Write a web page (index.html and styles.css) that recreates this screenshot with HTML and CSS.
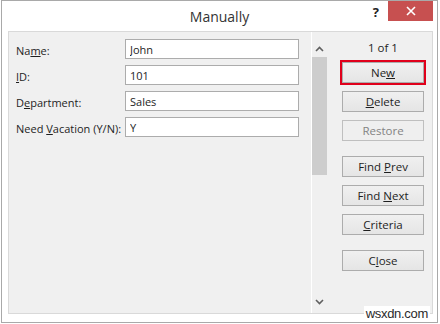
FILE: index.html
```html
<!DOCTYPE html>
<html>

<head>
    <link rel="stylesheet" href="styles.css">
</head>

<body>
    <div class="window">
        <div class="titlebar">
            <span></span>
            <span class="title">Manually</span>
            <div class="controls">
                <span class="help">?</span>
                <span class="close">
                    <svg width="10" height="10" viewBox="0 0 10 10">
                        <path d="M1 1 L9 9 M9 1 L1 9" stroke="#fff" stroke-width="1.6" />
                    </svg>
                </span>
            </div>
        </div>

        <div class="panel">
            <div class="fields">
                <label class="row"><span class="label">Na<u>m</u>e:</span><input type="text" class="textfield" value="John" /></label>
                <label class="row"><span class="label"><u>I</u>D:</span><input type="text" class="textfield" value="101" /></label>
                <label class="row"><span class="label">D<u>e</u>partment:</span><input type="text" class="textfield" value="Sales" /></label>
                <label class="row"><span class="label">Need <u>V</u>acation (Y/N):</span><input type="text" class="textfield" value="Y" /></label>
            </div>

            <div class="scrollbar">
                <span class="arrow">
                    <svg width="9" height="6" viewBox="0 0 9 6"><path d="M1 5 L4.5 1.5 L8 5" fill="none" stroke="#606060" stroke-width="1.6" /></svg>
                </span>
                <div class="thumb"></div>
                <span class="arrow down">
                    <svg width="9" height="6" viewBox="0 0 9 6"><path d="M1 1 L4.5 4.5 L8 1" fill="none" stroke="#606060" stroke-width="1.6" /></svg>
                </span>
            </div>

            <div class="actions">
                <div class="counter">1 of 1</div>
                <button class="btn selected">Ne<u>w</u></button>
                <button class="btn"><u>D</u>elete</button>
                <button class="btn" disabled>Restore</button>
                <button class="btn group">Find <u>P</u>rev</button>
                <button class="btn">Find <u>N</u>ext</button>
                <button class="btn"><u>C</u>riteria</button>
                <button class="btn group">C<u>l</u>ose</button>
            </div>
        </div>

        <div class="watermark">wsxdn.com</div>
    </div>
</body>

</html>
```

FILE: styles.css
```css
html,
body {
    margin: 0;
    padding: 0;
    background-color: #fff;
}

.window {
    position: relative;
    box-sizing: border-box;
    width: 437px;
    height: 323px;
    margin-left: 1px;
    border: 1px solid #a9a9a9;
    background-color: #fff;
    font-family: "Open Sans", "Noto Sans", sans-serif;
    color: #1e1e1e;
}

.titlebar {
    display: grid;
    grid-template-columns: 1fr auto 1fr;
    align-items: start;
    height: 30px;
}

.titlebar .title {
    font-size: 14px;
    line-height: 30px;
    color: #333;
    padding-top: 1px;
}

.controls {
    display: flex;
    justify-content: flex-end;
    align-items: flex-start;
    padding-right: 4px;
}

.help {
    font-size: 13px;
    font-weight: bold;
    color: #222;
    line-height: 22px;
    margin-right: 9px;
}

.close {
    display: flex;
    align-items: center;
    justify-content: center;
    width: 45px;
    height: 20px;
    background-color: #c75050;
}

.panel {
    display: flex;
    box-sizing: border-box;
    height: 283px;
    margin: 0 4px 0 6px;
    border: 1px solid #d9d9d9;
    background-color: #f0f0f0;
}

.fields {
    display: flex;
    flex-direction: column;
    gap: 6px;
    width: 302px;
    box-sizing: border-box;
    padding: 7px 0 0 7px;
}

.row {
    display: flex;
    align-items: center;
    height: 20px;
}

.label {
    width: 109px;
    font-size: 11px;
    padding-top: 2px;
}

.textfield {
    box-sizing: border-box;
    width: 174px;
    height: 20px;
    margin: 0;
    padding: 0 4px;
    border: 1px solid #acacac;
    background-color: #fff;
    font-family: inherit;
    font-size: 11px;
    color: #1e1e1e;
    outline: none;
}

.scrollbar {
    display: flex;
    flex-direction: column;
    align-items: flex-start;
    box-sizing: border-box;
    width: 17px;
    padding: 9px 0 3px 0;
    border-left: 1px solid #fff;
}

.arrow {
    display: flex;
    align-items: center;
    justify-content: center;
    width: 15px;
    height: 16px;
}

.arrow.down {
    margin-top: auto;
}

.thumb {
    width: 15px;
    height: 118px;
    background-color: #cdcdcd;
}

.actions {
    display: flex;
    flex-direction: column;
    gap: 8px;
    box-sizing: border-box;
    padding: 6px 0 0 14px;
}

.counter {
    width: 82px;
    height: 20px;
    line-height: 20px;
    text-align: center;
    font-size: 11.5px;
    margin-bottom: -4px;
}

.btn {
    box-sizing: border-box;
    width: 82px;
    height: 21px;
    margin: 0;
    padding: 0;
    border: 1px solid #acacac;
    background: linear-gradient(#f0f0f0, #e5e5e5);
    font-family: inherit;
    font-size: 11.5px;
    color: #1e1e1e;
}

.btn.group {
    margin-top: 7px;
}

.btn.selected {
    outline: 2px solid #e0001b;
}

.btn:disabled {
    color: #838383;
    border-color: #bfbfbf;
    background: #efefef;
}

.watermark {
    position: absolute;
    right: 7px;
    bottom: 1px;
    padding: 0 2px;
    background-color: #fff;
    font-family: "Liberation Sans", Arial, sans-serif;
    font-size: 13px;
    letter-spacing: -0.3px;
    line-height: 15px;
    color: #2a2a2a;
}
```
